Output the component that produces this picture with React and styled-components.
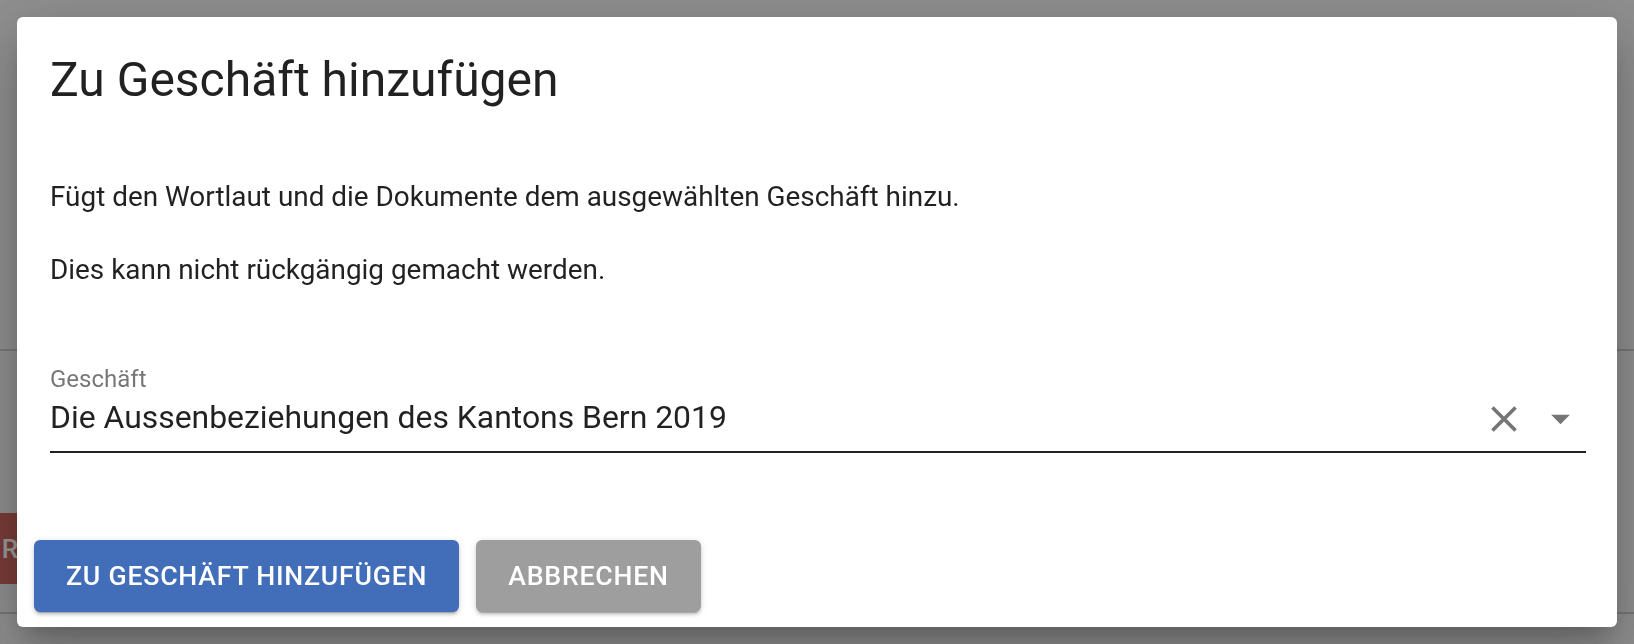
import React from 'react'
import styled, { createGlobalStyle } from 'styled-components'

const Global = createGlobalStyle`
  html, body {
    margin: 0;
    padding: 0;
    height: 100%;
    overflow: hidden;
  }
  body {
    font-family: Roboto, "Liberation Sans", Arial, sans-serif;
    background: #eeeeee;
  }
`

const Page = styled.div`
  height: 100vh;
  background: #eeeeee;
  display: flex;
  flex-direction: column;
`

const PageHeader = styled.div`
  height: 349px;
  border-bottom: 2px solid #c8c8c8;
  flex-shrink: 0;
`

const PageRow = styled.div`
  display: flex;
  padding-top: 162px;
  border-bottom: 2px solid #c4c4c4;
  padding-bottom: 28px;
`

const DangerButton = styled.button`
  margin-left: -70px;
  width: 100px;
  height: 71px;
  border: none;
  border-radius: 6px;
  background: #c9645d;
  color: #ffffff;
  font-family: inherit;
  font-size: 26px;
  font-weight: 500;
  text-align: right;
  padding: 0 12px 0 0;
`

const Backdrop = styled.div`
  position: fixed;
  inset: 0;
  background: rgba(0, 0, 0, 0.4);
  display: flex;
  padding: 17px;
`

const Dialog = styled.div`
  flex: 1;
  background: #ffffff;
  border-radius: 6px;
  display: flex;
  flex-direction: column;
  padding: 34px 0 15px 0;
  box-shadow: 0 15px 21px -10px rgba(0, 0, 0, 0.2),
    0 34px 53px 4px rgba(0, 0, 0, 0.14),
    0 13px 64px 11px rgba(0, 0, 0, 0.12);
`

const Title = styled.h2`
  margin: 0;
  padding: 0 33px;
  font-size: 48px;
  line-height: 1.2;
  font-weight: 400;
  color: rgba(0, 0, 0, 0.87);
`

const Content = styled.div`
  padding: 67px 31px 0 33px;
  display: flex;
  flex-direction: column;
`

const Text = styled.p`
  margin: 0 0 ${p => p.$gap || 0}px 0;
  font-size: 27.9px;
  line-height: 1.5;
  color: rgba(0, 0, 0, 0.87);
`

const Field = styled.div`
  margin-top: 76px;
  display: flex;
  flex-direction: column;
  border-bottom: 2px solid rgba(0, 0, 0, 0.87);
  padding-bottom: 10px;
`

const Label = styled.label`
  font-size: 24px;
  line-height: 1;
  color: rgba(0, 0, 0, 0.54);
  margin-bottom: 5px;
`

const ValueRow = styled.div`
  display: flex;
  align-items: center;
  height: 45px;
  padding-right: 3px;
`

const Value = styled.div`
  flex: 1;
  font-size: 31.9px;
  line-height: 1.2;
  padding-bottom: 4px;
  color: rgba(0, 0, 0, 0.87);
`

const IconButton = styled.span`
  display: flex;
  width: ${p => p.$size}px;
  height: ${p => p.$size}px;
  margin-left: ${p => p.$ml || 0}px;
  color: #757575;

  svg {
    width: 100%;
    height: 100%;
    fill: currentColor;
  }
`

const Actions = styled.div`
  margin-top: auto;
  padding: 0 17px;
  display: flex;
  gap: 17px;
`

const Button = styled.button`
  height: 72px;
  padding: 0 32px;
  border: none;
  border-radius: 6px;
  font-family: inherit;
  font-size: 26.7px;
  font-weight: 500;
  letter-spacing: 0.02857em;
  text-transform: uppercase;
  color: #ffffff;
  background: ${p => (p.$primary ? '#426db9' : '#9e9e9e')};
  box-shadow: 0 4px 1px -3px rgba(0, 0, 0, 0.2),
    0 3px 3px 0 rgba(0, 0, 0, 0.14),
    0 1px 7px 0 rgba(0, 0, 0, 0.12);
`

const CloseIcon = () => (
  <svg viewBox="0 0 24 24">
    <path d="M19 6.41L17.59 5 12 10.59 6.41 5 5 6.41 10.59 12 5 17.59 6.41 19 12 13.41 17.59 19 19 17.59 13.41 12z" />
  </svg>
)

const DropIcon = () => (
  <svg viewBox="0 0 24 24">
    <path d="M7 10l5 5 5-5z" />
  </svg>
)

export default function App() {
  return (
    <>
      <Global />
      <Page>
        <PageHeader />
        <PageRow>
          <DangerButton>R</DangerButton>
        </PageRow>
      </Page>
      <Backdrop>
        <Dialog>
          <Title>Zu Geschäft hinzufügen</Title>
          <Content>
            <Text $gap={32}>Fügt den Wortlaut und die Dokumente dem ausgewählten Geschäft hinzu.</Text>
            <Text>Dies kann nicht rückgängig gemacht werden.</Text>
            <Field>
              <Label>Geschäft</Label>
              <ValueRow>
                <Value>Die Aussenbeziehungen des Kantons Bern 2019</Value>
                <IconButton $size={44}><CloseIcon /></IconButton>
                <IconButton $size={45} $ml={12}><DropIcon /></IconButton>
              </ValueRow>
            </Field>
          </Content>
          <Actions>
            <Button $primary>Zu Geschäft hinzufügen</Button>
            <Button>Abbrechen</Button>
          </Actions>
        </Dialog>
      </Backdrop>
    </>
  )
}
